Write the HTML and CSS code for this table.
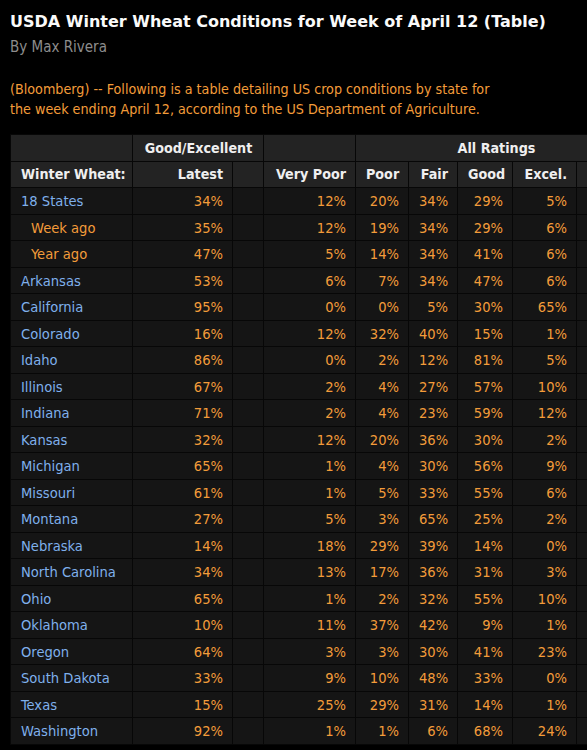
FILE: index.html
```html
<!DOCTYPE html>
<html>
    <head>
        <link rel="stylesheet" href="styles.css">
        <title>USDA Winter Wheat Conditions</title>
    </head>
    <body>
        <h1 class="headline">USDA Winter Wheat Conditions for Week of April 12 (Table)</h1>
        <div class="byline">By Max Rivera</div>
        <p class="lede">(Bloomberg) -- Following is a table detailing US crop conditions by state for the week ending April 12, according to the US Department of Agriculture.</p>

        <div class="tableWrap">
            <table class="cropTable">
                <colgroup>
                    <col class="colName">
                    <col class="colLatest">
                    <col class="colGap">
                    <col class="colVeryPoor">
                    <col class="colPoor">
                    <col class="colFair">
                    <col class="colGood">
                    <col class="colExcel">
                    <col class="colExtra">
                </colgroup>
                <thead>
                    <tr>
                        <th></th>
                        <th colspan="2" class="center">Good/Excellent</th>
                        <th></th>
                        <th colspan="5" class="center">All Ratings</th>
                    </tr>
                    <tr>
                        <th class="left">Winter Wheat:</th>
                        <th>Latest</th>
                        <th></th>
                        <th>Very Poor</th>
                        <th>Poor</th>
                        <th>Fair</th>
                        <th>Good</th>
                        <th>Excel.</th>
                        <th></th>
                    </tr>
                </thead>
                <tbody>
                    <tr><td class="state">18 States</td><td>34%</td><td></td><td>12%</td><td>20%</td><td>34%</td><td>29%</td><td>5%</td><td></td></tr>
                    <tr><td class="sub">Week ago</td><td>35%</td><td></td><td>12%</td><td>19%</td><td>34%</td><td>29%</td><td>6%</td><td></td></tr>
                    <tr><td class="sub">Year ago</td><td>47%</td><td></td><td>5%</td><td>14%</td><td>34%</td><td>41%</td><td>6%</td><td></td></tr>
                    <tr><td class="state">Arkansas</td><td>53%</td><td></td><td>6%</td><td>7%</td><td>34%</td><td>47%</td><td>6%</td><td></td></tr>
                    <tr><td class="state">California</td><td>95%</td><td></td><td>0%</td><td>0%</td><td>5%</td><td>30%</td><td>65%</td><td></td></tr>
                    <tr><td class="state">Colorado</td><td>16%</td><td></td><td>12%</td><td>32%</td><td>40%</td><td>15%</td><td>1%</td><td></td></tr>
                    <tr><td class="state">Idaho</td><td>86%</td><td></td><td>0%</td><td>2%</td><td>12%</td><td>81%</td><td>5%</td><td></td></tr>
                    <tr><td class="state">Illinois</td><td>67%</td><td></td><td>2%</td><td>4%</td><td>27%</td><td>57%</td><td>10%</td><td></td></tr>
                    <tr><td class="state">Indiana</td><td>71%</td><td></td><td>2%</td><td>4%</td><td>23%</td><td>59%</td><td>12%</td><td></td></tr>
                    <tr><td class="state">Kansas</td><td>32%</td><td></td><td>12%</td><td>20%</td><td>36%</td><td>30%</td><td>2%</td><td></td></tr>
                    <tr><td class="state">Michigan</td><td>65%</td><td></td><td>1%</td><td>4%</td><td>30%</td><td>56%</td><td>9%</td><td></td></tr>
                    <tr><td class="state">Missouri</td><td>61%</td><td></td><td>1%</td><td>5%</td><td>33%</td><td>55%</td><td>6%</td><td></td></tr>
                    <tr><td class="state">Montana</td><td>27%</td><td></td><td>5%</td><td>3%</td><td>65%</td><td>25%</td><td>2%</td><td></td></tr>
                    <tr><td class="state">Nebraska</td><td>14%</td><td></td><td>18%</td><td>29%</td><td>39%</td><td>14%</td><td>0%</td><td></td></tr>
                    <tr><td class="state">North Carolina</td><td>34%</td><td></td><td>13%</td><td>17%</td><td>36%</td><td>31%</td><td>3%</td><td></td></tr>
                    <tr><td class="state">Ohio</td><td>65%</td><td></td><td>1%</td><td>2%</td><td>32%</td><td>55%</td><td>10%</td><td></td></tr>
                    <tr><td class="state">Oklahoma</td><td>10%</td><td></td><td>11%</td><td>37%</td><td>42%</td><td>9%</td><td>1%</td><td></td></tr>
                    <tr><td class="state">Oregon</td><td>64%</td><td></td><td>3%</td><td>3%</td><td>30%</td><td>41%</td><td>23%</td><td></td></tr>
                    <tr><td class="state">South Dakota</td><td>33%</td><td></td><td>9%</td><td>10%</td><td>48%</td><td>33%</td><td>0%</td><td></td></tr>
                    <tr><td class="state">Texas</td><td>15%</td><td></td><td>25%</td><td>29%</td><td>31%</td><td>14%</td><td>1%</td><td></td></tr>
                    <tr><td class="state">Washington</td><td>92%</td><td></td><td>1%</td><td>1%</td><td>6%</td><td>68%</td><td>24%</td><td></td></tr>
                </tbody>
            </table>
        </div>
    </body>
</html>
```

FILE: styles.css
```css
html {
    overflow: hidden;
}
body {
    margin: 0;
    padding: 0 0 0 10px;
    background: #000;
    font-family: "DejaVu Sans Condensed", "DejaVu Sans", sans-serif;
}
.headline {
    margin: 11px 0 0 0;
    color: #fafafa;
    font-family: "DejaVu Sans", sans-serif;
    font-size: 16px;
    font-weight: bold;
    line-height: 22px;
}
.byline {
    margin-top: 4px;
    color: #8c8c8c;
    font-size: 15px;
    line-height: 20px;
}
.lede {
    margin: 22px 0 0 0;
    color: #f39c3a;
    font-size: 14.2px;
    line-height: 20px;
    width: 500px;
}
.tableWrap {
    margin-top: 15px;
    overflow: hidden;
}
.cropTable {
    border-collapse: collapse;
    table-layout: fixed;
    width: 626px;
    font-size: 14.6px;
}
.colName     { width: 122px; }
.colLatest   { width: 100px; }
.colGap      { width: 31px; }
.colVeryPoor { width: 92px; }
.colPoor     { width: 53px; }
.colFair     { width: 49px; }
.colGood     { width: 55px; }
.colExcel    { width: 64px; }
.colExtra    { width: 60px; }
.cropTable th, .cropTable td {
    border: 1px solid #070707;
    padding: 0 9px 0 10px;
    height: 25.5px;
    white-space: nowrap;
    overflow: hidden;
}
.cropTable th {
    background: #232323;
    color: #efefef;
    font-size: 14.2px;
    font-weight: bold;
    text-align: right;
}
.cropTable th.left {
    text-align: left;
}
.cropTable th.center {
    text-align: center;
}
.cropTable td {
    background: #151515;
    color: #f39c3a;
    text-align: right;
}
.cropTable td.state {
    color: #7fb0ec;
    text-align: left;
}
.cropTable td.sub {
    padding-left: 20px;
    text-align: left;
}
```
